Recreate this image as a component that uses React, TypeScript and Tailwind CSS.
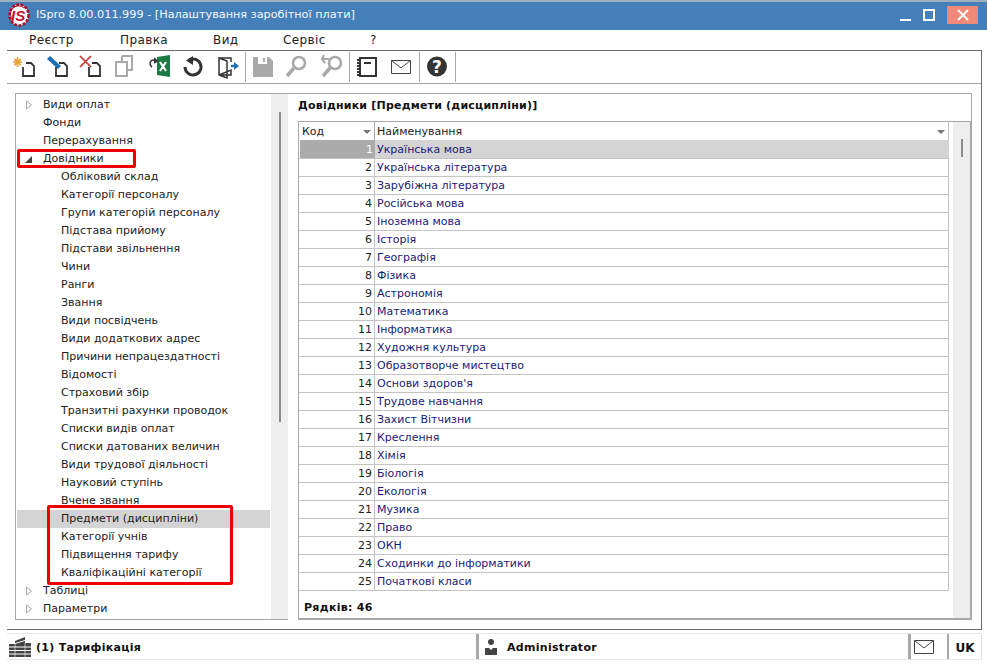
import React from "react";

const font = { fontFamily: '"DejaVu Sans", Verdana, sans-serif' };

const tree: [string, number, string?][] = [
  ["Види оплат", 0, "c"], ["Фонди", 0], ["Перерахування", 0], ["Довідники", 0, "o"],
  ["Обліковий склад", 1], ["Категорії персоналу", 1], ["Групи категорій персоналу", 1], ["Підстава прийому", 1],
  ["Підстави звільнення", 1], ["Чини", 1], ["Ранги", 1], ["Звання", 1], ["Види посвідчень", 1],
  ["Види додаткових адрес", 1], ["Причини непрацездатності", 1], ["Відомості", 1], ["Страховий збір", 1],
  ["Транзитні рахунки проводок", 1], ["Списки видів оплат", 1], ["Списки датованих величин", 1],
  ["Види трудової діяльності", 1], ["Науковий ступінь", 1], ["Вчене звання", 1], ["Предмети (дисципліни)", 1],
  ["Категорії учнів", 1], ["Підвищення тарифу", 1], ["Кваліфікаційні категорії", 1], ["Таблиці", 0, "c"], ["Параметри", 0, "c"],
];

const rows = ["Українська мова", "Українська література", "Зарубіжна література", "Російська мова", "Іноземна мова", "Історія", "Географія", "Фізика", "Астрономія", "Математика", "Інформатика", "Художня культура", "Образотворче мистецтво", "Основи здоров'я", "Трудове навчання", "Захист Вітчизни", "Креслення", "Хімія", "Біологія", "Екологія", "Музика", "Право", "ОКН", "Сходинки до інформатики", "Початкові класи"];

const Doc = ({ x = 13 }: { x?: number }) => (
  <path d={`M${x + 3} 9h5l3 3v10H${x}V13`} fill="none" stroke="#333" strokeWidth="1.8" />
);

const Ico = ({ children }: { children: React.ReactNode }) => (
  <svg width="26" height="26" viewBox="0 0 26 26" className="shrink-0">{children}</svg>
);

const Mail = () => (
  <svg width="20" height="14" viewBox="0 0 20 14" className="shrink-0"><path d="M.5.5h19v13H.5z M.5.5 10 8 19.5.5" fill="none" stroke="#444" strokeWidth="1" /></svg>
);

const Sep = () => <div className="w-px h-[30px] bg-[#a8a8a8] self-center shrink-0" />;

export default function App() {
  return (
    <div className="relative w-[987px] h-[665px] bg-white overflow-hidden flex flex-col text-[11px] text-[#222]" style={font}>
      <div className="h-[30px] shrink-0 bg-[#457fba] border-t-2 border-[#9fb0bf] flex items-center text-white">
        <svg width="22" height="24" viewBox="0 0 22 24" className="ml-[8px] shrink-0 -mt-[2px]">
          <ellipse cx="11" cy="12" rx="9.5" ry="10.5" fill="#fff" stroke="#a81224" strokeWidth="2.6" strokeDasharray="3 1.4" />
          <path d="M5 17a8 8 0 0 1 11-12" fill="none" stroke="#a81224" strokeWidth="1" />
          <text x="3" y="18" fontSize="15" fontWeight="700" fontStyle="italic" fill="#c8102e" fontFamily="Liberation Sans">IS</text>
        </svg>
        <span className="ml-[6px] -mt-[1px] text-[11.25px] text-[#f4f7fb]">ISpro 8.00.011.999 - [Налаштування заробітної плати]</span>
        <div className="ml-auto flex items-center mr-[9px] -mt-[2px]">
          <div className="w-[11px] h-[2px] bg-white mt-[9px] mr-[12px]" />
          <div className="w-[12px] h-[12px] border-2 border-white mr-[12px]" />
          <div className="w-[31px] h-[18px] bg-[#f08a78] flex items-center justify-center">
            <svg width="12" height="12" viewBox="0 0 12 12"><path d="M1 1l10 10M11 1 1 11" stroke="#fff" strokeWidth="1.8" /></svg>
          </div>
        </div>
      </div>

      <div className="h-[20px] shrink-0 flex items-center text-[12px] tracking-[0.4px] text-[#222] pl-[29px]">
        <span className="w-[91px]">Реєстр</span>
        <span className="w-[93px]">Правка</span>
        <span className="w-[70px]">Вид</span>
        <span className="w-[87px]">Сервіс</span>
        <span>?</span>
      </div>

      <div className="ml-[7px] mr-[5px] flex-1 min-h-0 border-t border-r border-b border-[#6d6d6d] flex flex-col">
        <div className="h-[33px] shrink-0 border-b border-[#a8a8a8] flex items-center pl-[3px]">
          <div className="flex gap-[8px] items-center">
            <Ico><path d="M3 8h9M7.5 3v10M4.3 4.8l6.4 6.4M10.7 4.8l-6.4 6.4" stroke="#e8a33a" strokeWidth="1.7" /><Doc /></Ico>
            <Ico><path d="M3 5 L6 2 L17 12 L14 15z" fill="#1c6fb5" /><Doc x={12} /></Ico>
            <Ico><path d="M2 2l11 11M13 2 2 13" stroke="#c8372d" strokeWidth="1.7" /><Doc x={11} /></Ico>
            <Ico><path d="M10 2h10v14h-4 M10 2v5" fill="none" stroke="#a9a9a9" strokeWidth="2" /><path d="M4 8h11v14H4z" fill="#fff" stroke="#a9a9a9" strokeWidth="2" /></Ico>
            <Ico><path d="M11 3l13-2v22l-13-2z" fill="#1e7a45" /><path d="M14 8l6 9M20 8l-6 9" stroke="#fff" strokeWidth="2.2" /><path d="M11 8a4 4 0 0 0-6-1 4 4 0 0 0 1 6" fill="none" stroke="#333" strokeWidth="1.5" /><path d="M8 3l4 4-4 3z" fill="#333" /></Ico>
            <Ico><path d="M9 6a8 8 0 1 1-4 7" fill="none" stroke="#333" strokeWidth="3" /><path d="M13 2v9L6 6.5z" fill="#333" /></Ico>
            <Ico><path d="M5 4h12v4 M17 16v5H5z M5 4l8 3v17l-8-3z" fill="none" stroke="#333" strokeWidth="1.5" /><path d="M17 12h4" stroke="#1c6fb5" strokeWidth="2.4" /><path d="M20 8l5 4-5 4z" fill="#1c6fb5" /></Ico>
          </div>
          <div className="w-[5px] shrink-0" />
          <Sep />
          <div className="flex gap-[8px] items-center ml-[4px]">
            <Ico><path d="M3 3h16l4 4v16H3z" fill="#a9a9a9" /><path d="M8 3h9v7H8z" fill="#fff" /><path d="M13 4h2v4h-2z" fill="#a9a9a9" /></Ico>
            <Ico><circle cx="15" cy="9" r="6" fill="none" stroke="#a9a9a9" strokeWidth="2.6" /><path d="M10 14l-7 8" stroke="#a9a9a9" strokeWidth="3.6" /></Ico>
            <Ico><circle cx="17" cy="9" r="6" fill="none" stroke="#a9a9a9" strokeWidth="2.6" /><path d="M12 14l-7 8" stroke="#a9a9a9" strokeWidth="3.6" /><path d="M3 5h8M6 1l-2 4 3 4" fill="none" stroke="#a9a9a9" strokeWidth="2.2" /></Ico>
          </div>
          <div className="w-[5px] shrink-0" />
          <Sep />
          <div className="flex items-center ml-[4px]">
            <Ico><path d="M6 4h16v18H6z" fill="#fff" stroke="#333" strokeWidth="2" /><path d="M10 8h7v2h-7z" fill="#333" /><path d="M4 5v17" stroke="#333" strokeWidth="2" strokeDasharray="2 1" /></Ico>
            <div className="ml-[11px]"><Mail /></div>
          </div>
          <div className="w-[8px] shrink-0" />
          <Sep />
          <div className="ml-[4px] flex"><Ico><circle cx="13" cy="12.5" r="10" fill="#333" /><text x="13" y="18.5" textAnchor="middle" fontSize="17" fontWeight="700" fill="#fff" fontFamily="DejaVu Sans">?</text></Ico></div>
          <div className="w-[5px] shrink-0" />
          <Sep />
        </div>

        <div className="h-[9px] shrink-0" />

        <div className="flex h-[527px] shrink-0 pl-[8px] pr-[9px]">
          <div className="w-[273px] shrink-0 border-l border-t border-b border-[#a8a8a8] flex">
            <div className="w-[254px] pl-[1px] pt-[2px] shrink-0">
              {tree.map(([t, lvl, m], i) => (
                <div key={i} className={`h-[18px] flex items-center ${t === "Предмети (дисципліни)" ? "bg-[#d4d4d4]" : ""}`}>
                  <div className={`shrink-0 flex justify-center pr-[3px] ${lvl ? "w-[44px]" : "w-[26px]"}`}>
                    {m === "c" && <svg width="8" height="10" viewBox="0 0 8 10"><path d="M1.5 1l5 4-5 4z" fill="#fff" stroke="#aaa" /></svg>}
                    {m === "o" && <svg width="9" height="9" viewBox="0 0 9 9"><path d="M8 1v7H1z" fill="#444" /></svg>}
                  </div>
                  <span className="whitespace-nowrap">{t}</span>
                </div>
              ))}
            </div>
            <div className="ml-[1px] w-[17px] bg-[#eeeeee] pt-[18px] flex justify-center shrink-0 h-full">
              <div className="w-[2px] h-[310px] bg-[#8c8c8c]" />
            </div>
          </div>

          <div className="flex-1 min-w-0 border-t border-r border-[#a8a8a8] flex flex-col">
            <div className="h-[27px] shrink-0 pl-[10px] pb-[2px] font-bold tracking-[0.2px] text-[#111] flex items-center">Довідники [Предмети (дисципліни)]</div>
            <div className="ml-[10px] flex flex-1 min-h-0 border-l border-t border-r border-b-2 border-[#a8a8a8]">
              <div className="w-[650px] shrink-0">
                <div className="h-[18px] flex">
                  <div className="ml-px w-[75px] flex items-center justify-between pl-[2px] pr-[2px] pt-[3px] border-r border-[#a8a8a8]">
                    <span>Код</span>
                    <svg width="9" height="5" viewBox="0 0 9 5"><path d="M0 0h8L4 4z" fill="#777" /></svg>
                  </div>
                  <div className="flex-1 flex items-center justify-between pl-[2px] pr-[2px] pt-[3px] border-r border-[#c4c4c4]">
                    <span>Найменування</span>
                    <svg width="9" height="5" viewBox="0 0 9 5"><path d="M0 0h8L4 4z" fill="#777" /></svg>
                  </div>
                </div>
                {rows.map((r, i) => (
                  <div key={i} className={`flex ${i === 0 ? "h-[18px]" : "border-t border-[#c4c4c4] h-[18px]"} ${i === rows.length - 1 ? "border-b h-[19px]" : ""}`}>
                    <div className={`w-[75px] ml-px shrink-0 text-right pr-[2px] ${i === 0 ? "bg-[#ababab] text-white leading-[20px]" : "leading-[18px] border-r border-[#c4c4c4]"}`}>{i + 1}</div>
                    <div className={`flex-1 pl-[2px] text-[#1a1a78] ${i === 0 ? "bg-[#d4d4d4] leading-[20px]" : "leading-[18px] border-r border-[#c4c4c4]"}`}>{r}</div>
                  </div>
                ))}
                <div className="h-[26px] flex items-center font-bold tracking-[0.3px] text-[#111] pl-[5px] pt-[9px]">Рядків: 46</div>
              </div>
              <div className="ml-[4px] w-[17px] bg-[#eeeeee] pt-[17px] flex justify-center shrink-0">
                <div className="w-[2px] h-[18px] bg-[#8c8c8c]" />
              </div>
            </div>
          </div>
        </div>
        <div className="flex-1" />
      </div>

      <div className="absolute left-[17px] top-[149px] w-[119px] h-[19px] border-[3px] border-[#ee0000] rounded-[2px]" />
      <div className="absolute left-[47px] top-[505px] w-[186px] h-[80px] border-[3px] border-[#ee0000] rounded-[2px]" />

      <div className="ml-[7px] mr-[5px] mt-[3px] mb-[5px] shrink-0 h-[27px] border-t border-b border-[#e8e8e8] flex items-stretch font-bold tracking-[0.3px] text-[#111]">
        <div className="w-[469px] flex items-center pl-[2px] pt-[3px]">
          <svg width="22" height="20" viewBox="0 0 22 20" className="mr-[5px] shrink-0 -mt-[3px]">
            <path d="M6 4l10-4v6h6v14H0V7h6z" fill="#444" />
            <path d="M0 10h22M0 13.5h22M0 17h22M6 6.5l10-3" stroke="#fff" strokeWidth="1" />
            <path d="M16 6v14M6 7v13" stroke="#fff" strokeWidth="0.6" />
          </svg>
          (1) Тарифікація
        </div>
        <div className="w-[432px] border-l-[3px] border-[#a8a8a8] flex items-center pl-[6px] pt-[3px]">
          <svg width="12" height="16" viewBox="0 0 12 16" className="mr-[10px] shrink-0 -mt-[3px]"><circle cx="6" cy="3" r="3" fill="#444" /><path d="M0 9h4l2 2 2-2h4v7H0z" fill="#444" /></svg>
          Administrator
        </div>
        <div className="w-[41px] border-l-[3px] border-r-2 border-[#a8a8a8] flex items-center pl-[3px]"><Mail /></div>
        <div className="flex-1 flex items-center justify-center pt-[3px] text-[12px] tracking-normal border-r border-[#e0e0e0]">UK</div>
      </div>
    </div>
  );
}
